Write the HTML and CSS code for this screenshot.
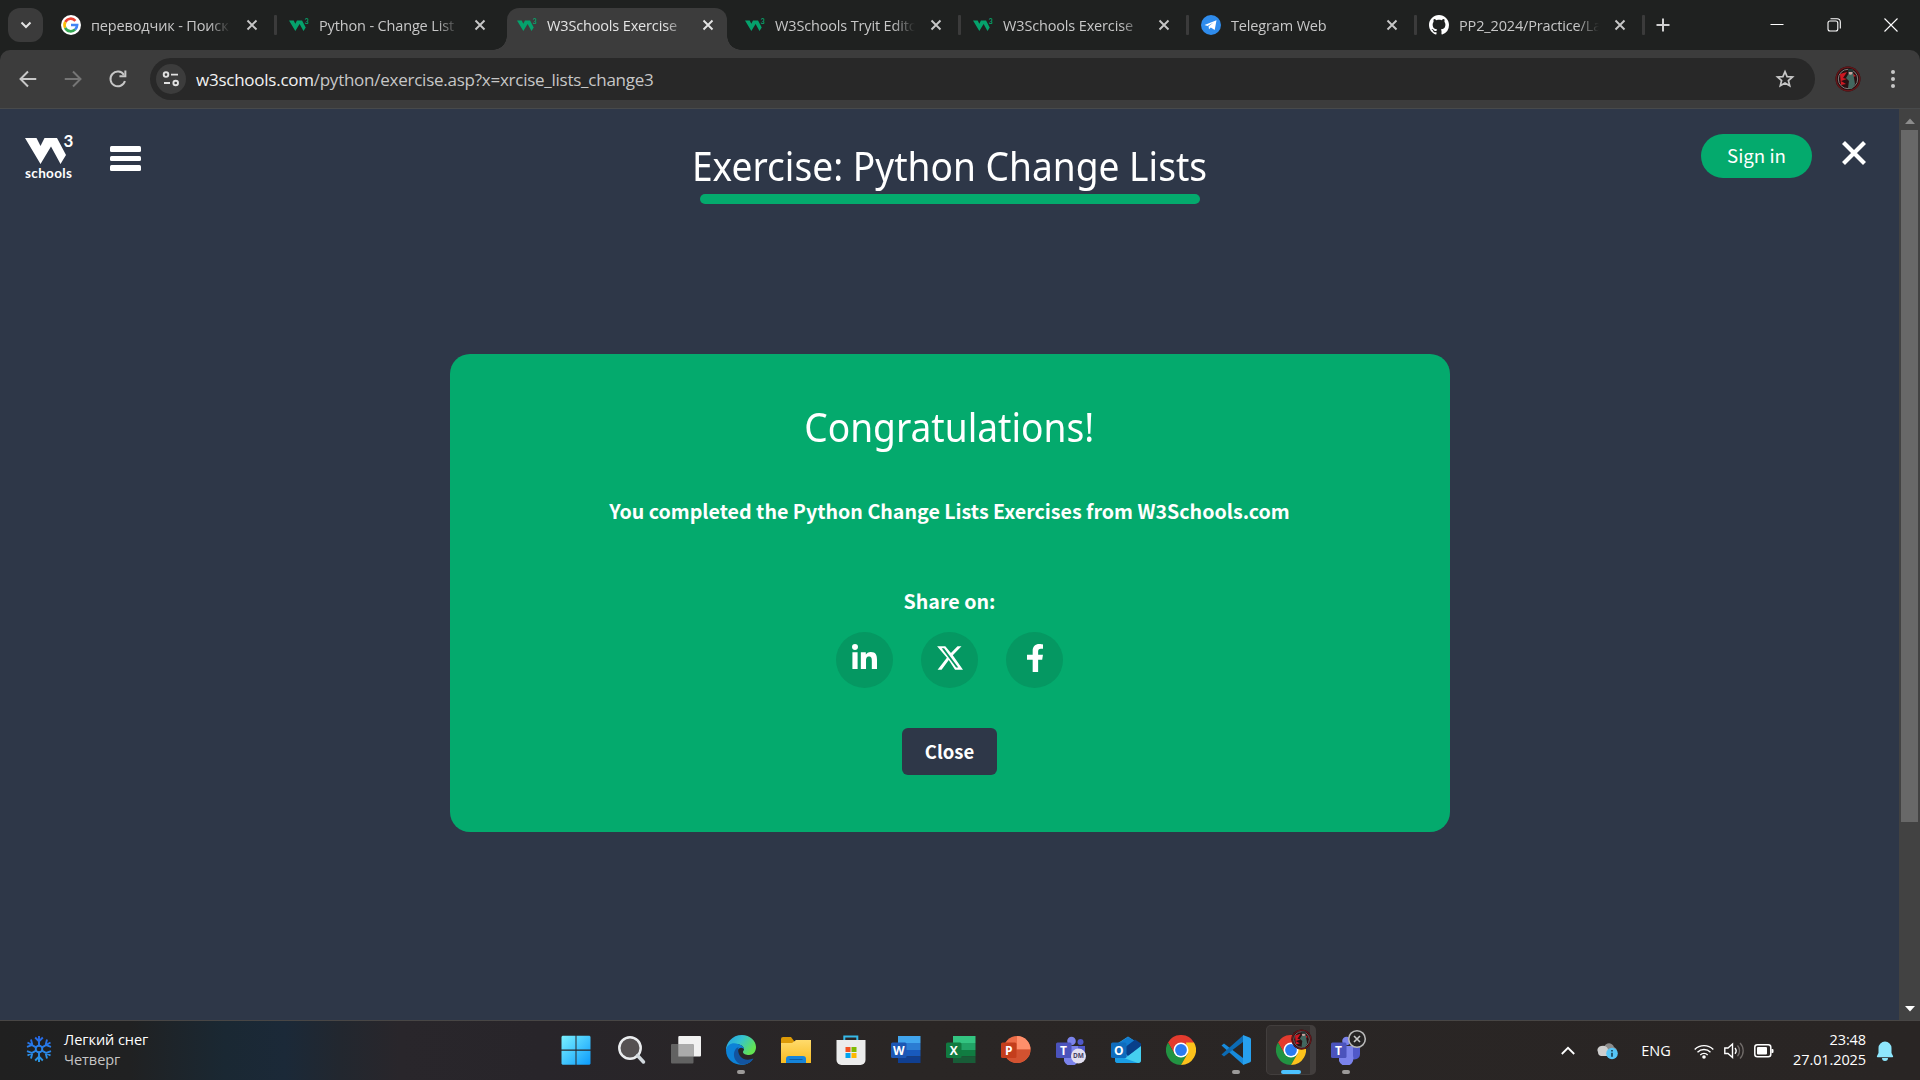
FILE: index.html
```html
<!DOCTYPE html>
<html lang="ru">
<head>
<meta charset="utf-8">
<title>W3Schools Exercise</title>
<link rel="stylesheet" href="styles.css">
</head>
<body>
<svg class="defs" aria-hidden="true">
  <symbol id="w3mark" viewBox="0 0 49 30"><path d="M0 4h11.500l4 8 4-8H32l9 17-5.500 9L26 12.500 15.500 30z" fill="currentColor"/><text x="38.500" y="13" class="mark-three" fill="currentColor">3</text></symbol>
  <symbol id="x" viewBox="0 0 12 12"><path d="M1.500 1.500l9 9m0-9l-9 9" stroke="currentColor" stroke-width="1.900" fill="none"/></symbol>
  <symbol id="chrome" viewBox="0 0 30 30">
    <path d="M2 7.500A15 15 0 0 1 28 7.500L21 15 8.500 18.700z" fill="#e33b2e"/>
    <path d="M2 7.500A15 15 0 0 0 15 30L21.500 18.700 8.500 18.700z" fill="#229342"/>
    <path d="M28 7.500A15 15 0 0 1 15 30L21.500 18.700 20 7.500z" fill="#fcc21b"/>
    <circle cx="15" cy="15" r="7.500" fill="#fff"/><circle cx="15" cy="15" r="5.900" fill="#2a7bf0"/>
  </symbol>
  <symbol id="avatar" viewBox="0 0 26 26">
    <circle cx="13" cy="13" r="12.500" fill="#1c1011"/><circle cx="13" cy="13" r="11.700" fill="none" stroke="#651619" stroke-width="1.500"/><circle cx="13" cy="13" r="9.700" fill="#291012" stroke="#827b7b" stroke-width="1"/>
    <path d="M5 8l7-2-4 6 4 1-6 2 5 3-5 1zM17 7l4 3-3 1z" fill="#cd1822"/><path d="M14 7l4-1 1 6 1 6-3 5-4-1 1-7-3-3z" fill="#42675f"/><circle cx="15.500" cy="6.700" r="2" fill="#c8a09c"/><path d="M13 3h5v3h-5z" fill="#243533"/>
  </symbol>
</svg>

<header class="browser">
  <div class="tabstrip">
    <div class="tabsearch"><svg width="12" height="8" viewBox="0 0 12 8"><path d="M1.500 1.500L6 6l4.500-4.500" fill="none" stroke="#e3e3e3" stroke-width="2"/></svg></div>
    <div class="tabs">
      <div class="tab ruled"><svg class="fav" viewBox="0 0 20 20"><circle cx="10" cy="10" r="10" fill="#fff"/><g fill="none" stroke-width="2.700"><path d="M4.300 7A6.200 6.200 0 0 1 14.400 5.800" stroke="#ea4335"/><path d="M4.200 12.800A6.200 6.200 0 0 1 4.300 7" stroke="#fbbc05"/><path d="M14.200 14.400A6.200 6.200 0 0 1 4.200 12.800" stroke="#34a853"/><path d="M10 10h6.100A6 6 0 0 1 14.100 14.400" stroke="#4285f4"/></g></svg><span class="name">переводчик - Поиск</span><svg class="x"><use href="#x"/></svg></div>
      <div class="tab"><svg class="fav w3"><use href="#w3mark"/></svg><span class="name">Python - Change List</span><svg class="x"><use href="#x"/></svg></div>
      <div class="tab active"><svg class="fav w3"><use href="#w3mark"/></svg><span class="name">W3Schools Exercise</span><svg class="x"><use href="#x"/></svg></div>
      <div class="tab ruled"><svg class="fav w3"><use href="#w3mark"/></svg><span class="name">W3Schools Tryit Edito</span><svg class="x"><use href="#x"/></svg></div>
      <div class="tab ruled"><svg class="fav w3"><use href="#w3mark"/></svg><span class="name">W3Schools Exercise</span><svg class="x"><use href="#x"/></svg></div>
      <div class="tab ruled"><svg class="fav" viewBox="0 0 20 20"><circle cx="10" cy="10" r="10" fill="#2f8cec"/><path d="M3.500 10L15.500 5.200 13.700 15 9.800 12.400 8 14.200 7.600 11.300 12.500 7.500 6.500 11z" fill="#fff"/></svg><span class="name">Telegram Web</span><svg class="x"><use href="#x"/></svg></div>
      <div class="tab ruled"><svg class="fav" viewBox="0 0 16 16"><path fill="#fff" d="M8 0C3.580 0 0 3.580 0 8c0 3.540 2.290 6.530 5.470 7.590.4.070.55-.17.55-.38 0-.19-.01-.82-.01-1.490-2.010.37-2.530-.49-2.690-.94-.09-.23-.48-.94-.82-1.130-.28-.15-.68-.52-.01-.53.63-.01 1.080.58 1.230.82.72 1.210 1.870.87 2.330.66.07-.52.28-.87.51-1.070-1.780-.2-3.640-.89-3.640-3.950 0-.87.31-1.590.82-2.150-.08-.2-.36-1.020.08-2.120 0 0 .67-.21 2.200.82.64-.18 1.320-.27 2-.27s1.360.09 2 .27c1.530-1.040 2.200-.82 2.200-.82.44 1.100.16 1.920.08 2.120.51.56.82 1.270.82 2.150 0 3.070-1.870 3.750-3.650 3.950.29.25.54.73.54 1.480 0 1.070-.01 1.930-.01 2.200 0 .21.15.46.55.38A8.010 8.010 0 0 0 16 8c0-4.420-3.580-8-8-8z"/></svg><span class="name">PP2_2024/Practice/La</span><svg class="x"><use href="#x"/></svg></div>
    </div>
    <svg class="plus" width="14" height="14" viewBox="0 0 14 14"><path d="M7 .5v13M.5 7h13" stroke="#d0d0d0" stroke-width="2"/></svg>
    <div class="winbtns">
      <svg viewBox="0 0 14 14"><path d="M.5 6.500h13" stroke="#fff"/></svg>
      <svg viewBox="0 0 14 14"><rect x="1" y="3" width="9.800" height="10" rx="2" fill="none" stroke="#fff" stroke-width="1.100"/><path d="M3.500.8h6.500a3.300 3.300 0 0 1 3.300 3.300v6.500" fill="none" stroke="#fff" stroke-width="1.100"/></svg>
      <svg viewBox="0 0 14 14"><path d="M.5.5l13 13m0-13l-13 13" stroke="#fff" stroke-width="1.100"/></svg>
    </div>
  </div>
  <div class="toolbar">
    <svg class="nav" viewBox="0 0 20 20"><path d="M17.500 10H4M10 3.200L3.200 10l6.800 6.800" /></svg>
    <svg class="nav dim" viewBox="0 0 20 20"><path d="M2.500 10H16M10 3.200l6.800 6.800-6.800 6.800"/></svg>
    <svg class="nav" viewBox="0 0 20 20"><path d="M16.300 11.800A6.700 6.700 0 1 1 15.400 6.200"/><path d="M16.700 2.200v5.300h-5.400"/></svg>
    <div class="omnibox">
      <div class="siteinfo"><svg width="18" height="16" viewBox="0 0 18 16"><g fill="none" stroke="#e0e0e0" stroke-width="1.900"><circle cx="4" cy="3.600" r="2.300"/><path d="M9 3.600h7M2 12h6"/><circle cx="13.700" cy="12" r="2.300"/></g></svg></div>
      <div class="url"><b>w3schools.com</b><span>/python/exercise.asp?x=xrcise_lists_change3</span></div>
      <svg class="star" width="20" height="20" viewBox="0 0 20 20"><path d="M10 2.600l2.100 5 5.400.4-4.100 3.500 1.300 5.300L10 14l-4.700 2.800 1.300-5.300L2.500 8l5.400-.4z" fill="none" stroke="#c7c7c7" stroke-width="1.700"/></svg>
    </div>
    <svg class="me" width="26" height="26"><use href="#avatar"/></svg>
    <svg class="dots" width="4" height="18" viewBox="0 0 4 18"><g fill="#c7c7c7"><circle cx="2" cy="2" r="2"/><circle cx="2" cy="9" r="2"/><circle cx="2" cy="16" r="2"/></g></svg>
  </div>
</header>

<div class="viewport">
  <main class="page">
    <div class="top">
      <div class="left">
        <div class="logo"><svg width="49" height="30"><use href="#w3mark"/></svg><span>schools</span></div>
        <div class="burger"><i></i><i></i><i></i></div>
      </div>
      <div class="heading"><h1>Exercise: Python Change Lists</h1><div class="progress"></div></div>
      <div class="right">
        <a class="signin">Sign in</a>
        <svg width="26" height="26" viewBox="0 0 26 26"><path d="M2.500 2.500l21 21m0-21l-21 21" stroke="#fff" stroke-width="4.200"/></svg>
      </div>
    </div>
    <section class="card">
      <h2>Congratulations!</h2>
      <p class="done">You completed the Python Change Lists Exercises from W3Schools.com</p>
      <p class="share">Share on:</p>
      <div class="socials">
        <a><svg width="25" height="25" viewBox="0 0 448 448"><path fill="#fff" d="M100.280 448H7.400V148.900h92.880zM53.790 108.100C24.090 108.100 0 83.500 0 53.800a53.790 53.790 0 0 1 107.580 0c0 29.700-24.100 54.300-53.790 54.300zM447.900 448h-92.680V302.400c0-34.700-.7-79.200-48.290-79.200-48.290 0-55.690 37.700-55.690 76.700V448h-92.780V148.900h89.080v40.800h1.300c12.400-23.500 42.690-48.300 87.880-48.300 94 0 111.280 61.900 111.280 142.300V448z"/></svg></a>
        <a><svg width="26" height="24" viewBox="0 0 512 462"><path fill="#fff" d="M389.200 0h70.600L305.600 176.200 487 462H345L233.700 270.600 106.500 462H35.800L200.700 227.500 26.800 0H172.400l100.500 132.900zM364.400 419.800h39.100L151.100 39.900h-42z" transform="translate(-28) scale(1.11 1)"/></svg></a>
        <a><svg width="16" height="28" viewBox="0 0 294 512"><path fill="#fff" d="M279.140 288l14.220-92.660h-88.910v-60.130c0-25.350 12.420-50.060 52.240-50.060h40.420V6.260S260.430 0 225.360 0c-73.220 0-121.080 44.380-121.080 124.720v70.620H0V288h104.280v224h100.170V288z"/></svg></a>
      </div>
      <a class="close">Close</a>
    </section>
  </main>
  <div class="scrollbar"><svg width="10" height="6" viewBox="0 0 10 6"><path d="M0 6l5-5.500L10 6z" fill="#8c8c8c"/></svg><div class="thumb"></div><svg width="10" height="6" viewBox="0 0 10 6"><path d="M0 0h10L5 5.500z" fill="#fff"/></svg></div>
</div>

<footer class="taskbar">
  <div class="weather">
    <svg width="26" height="28" viewBox="-13 -14 26 28"><defs><linearGradient id="sn" gradientUnits="userSpaceOnUse" x1="0" y1="-13" x2="0" y2="13"><stop stop-color="#2566e8"/><stop offset="1" stop-color="#2b9be6"/></linearGradient></defs><g stroke="url(#sn)" stroke-width="1.900" fill="none"><circle r="3.300"/><path d="M0-3.500V-13M-3.800-11.500L0-7.700l3.800-3.800M0 3.500V13M-3.800 11.500L0 7.700l3.800 3.800M3-1.700L11.500-6.500M8-9.500L6.700-4 12-2.200M3 1.700L11.500 6.500M8 9.500L6.700 4 12 2.200M-3-1.700L-11.500-6.500M-8-9.500L-6.700-4-12-2.200M-3 1.700L-11.500 6.500M-8 9.500L-6.700 4-12 2.200"/></g></svg>
    <div><span>Легкий снег</span><span class="sub">Четверг</span></div>
  </div>
  <div class="apps">
    <div class="app"><svg viewBox="0 0 30 30"><defs><linearGradient id="wg" gradientUnits="userSpaceOnUse" x1="0" y1="0" x2="30" y2="30"><stop stop-color="#7df3ff"/><stop offset="1" stop-color="#0a9afc"/></linearGradient></defs><path d="M1.500.7H14.500V14.500H.5V1.700zM15.500 .7h13l1 1V14.500h-14zM.5 15.700h14v14h-13l-1-1zM15.500 15.700h14v13l-1 1h-13z" fill="url(#wg)"/></svg></div>
    <div class="app"><svg viewBox="0 0 30 30"><circle cx="14" cy="13" r="10.700" fill="#555152" stroke="#eaecee" stroke-width="2.500"/><path d="M21.500 20.500l6 6.500" stroke="#d1d8dd" stroke-width="3.500" stroke-linecap="round"/></svg></div>
    <div class="app"><svg viewBox="0 0 30 30"><rect x="7.300" y="1" width="22.700" height="20.500" rx="1" fill="#f1f1f1"/><rect x="0" y="9" width="22.500" height="19.500" rx="1" fill="#626262"/><path d="M7.300 9H21.500a1 1 0 0 1 1 1V21.500H7.300z" fill="#ababab"/></svg></div>
    <div class="app"><svg viewBox="0 0 30 30"><defs><linearGradient id="eg" x1="0" y1="0" x2="1" y2=".5"><stop offset=".1" stop-color="#25a5e2"/><stop offset=".5" stop-color="#35c3cf"/><stop offset="1" stop-color="#63e352"/></linearGradient></defs><path d="M0 15C0 8 6 0 16 0c8 0 14 6 14 12 0 5-3 8-7 8-3 0-6-1-6-3 0-1 1-1.500 1-3C18 10 9 5 0 15z" fill="url(#eg)"/><path d="M0 15C1 9 7 7 12 9c4 1 6 3 6 5-5-4-8 2-6 7s8 7 15 3C21 34 0 31 0 15z" fill="#0d82d7"/><path d="M12.500 12C5 15 7 29 17 29.500 22 29.500 26 26 27.500 23.500c-10 4-17-3-15-11.500z" fill="#13549f"/></svg><u></u></div>
    <div class="app"><svg viewBox="0 0 30 30"><path d="M0 4a2 2 0 0 1 2-2h8l3 4v5H0z" fill="#dc9a07"/><defs><linearGradient id="fo" x2="0" y2="1"><stop stop-color="#ffdb6c"/><stop offset="1" stop-color="#f7bb20"/></linearGradient></defs><path d="M0 8h11l4-3h15v23H0z" fill="url(#fo)"/><path d="M5 28v-4a3 3 0 0 1 3-3h14a3 3 0 0 1 3 3v4z" fill="#1584da"/><path d="M8.500 24.500h13" stroke="#0b5da5"/></svg></div>
    <div class="app"><svg viewBox="0 0 30 30"><path d="M8.300 7V1.500h13V7" fill="none" stroke="#36b9e8" stroke-width="2"/><path d="M.5 5h29v20a5 5 0 0 1-5 5h-19a5 5 0 0 1-5-5z" fill="#ececec"/><path d="M9.500 12h5v5h-5z" fill="#f25022"/><path d="M15.500 12h5v5h-5z" fill="#7fba00"/><path d="M9.500 18h5v5h-5z" fill="#00a4ef"/><path d="M15.500 18h5v5h-5z" fill="#ffb900"/></svg></div>
    <div class="app"><svg viewBox="0 0 30 30"><path d="M7 1h22.500v7H7z" fill="#41a5ee"/><path d="M7 8h22.500v7H7z" fill="#2b7cd3"/><path d="M7 15h22.500v6.500H7z" fill="#185abd"/><path d="M7 21.500h22.500V28H7z" fill="#103f91"/><rect y="7.500" width="15.500" height="15.500" rx="1.500" fill="#1c57b4"/><text x="7.800" y="19.500" class="letter">W</text></svg></div>
    <div class="app"><svg viewBox="0 0 30 30"><path d="M7 1h22.500v7H7z" fill="#33c481"/><path d="M7 8h22.500v7H7z" fill="#21a366"/><path d="M7 15h22.500v6.500H7z" fill="#107c41"/><path d="M7 21.500h22.500V28H7z" fill="#185c37"/><rect y="7.500" width="15.500" height="15.500" rx="1.500" fill="#117a40"/><text x="7.800" y="19.500" class="letter">X</text></svg></div>
    <div class="app"><svg viewBox="0 0 30 30"><circle cx="16" cy="14.500" r="13.500" fill="#ed6c47"/><path d="M16 1a13.500 13.500 0 0 1 13.500 13.500H16z" fill="#ff8f6b"/><path d="M29.500 14.500a13.500 13.500 0 0 1-27 0z" fill="#d35230"/><rect y="7.500" width="15.500" height="15.500" rx="1.500" fill="#c43e1c"/><text x="7.800" y="19.500" class="letter">P</text></svg></div>
    <div class="app"><svg viewBox="0 0 30 30"><circle cx="15.500" cy="6" r="4.300" fill="#7b83eb"/><circle cx="24.500" cy="7" r="3" fill="#5059c9"/><path d="M20 11h9v8h-9z" fill="#5059c9"/><path d="M8 11h14v10a7 7 0 0 1-14 5z" fill="#7b83eb"/><rect y="7.500" width="15.500" height="15.500" rx="1.500" fill="#4b53bc"/><text x="7.500" y="19.500" class="letter">T</text><circle cx="22.500" cy="21" r="7.500" fill="#e2dff0"/><text x="22.500" y="23.200" class="dm">DM</text></svg></div>
    <div class="app"><svg viewBox="0 0 30 30"><path d="M4 10L17 1.500 30 10v15a3 3 0 0 1-3 3H7a3 3 0 0 1-3-3z" fill="#2c9de2"/><path d="M16 9l8-4.500 6 4v4L17 21l-6-6z" fill="#083f8a"/><path d="M17 2l6 3.500L13 13 8 8z" fill="#117cd0"/><path d="M30 11v14a3 3 0 0 1-3 3H8z" fill="#45cff0"/><path d="M7 21l20 7H7a3 3 0 0 1-3-3z" fill="#1a9ee5"/><rect y="7.500" width="15.500" height="15.500" rx="1.500" fill="#0f6cbd"/><text x="7.800" y="19.700" class="letter">O</text></svg></div>
    <div class="app"><svg><use href="#chrome"/></svg></div>
    <div class="app"><svg viewBox="0 0 30 30"><path d="M.5 10.500L3 8.500l19 14.500v6.500z" fill="#178bdc"/><path d="M.5 19.500L3 21.500 22 7V.5z" fill="#0c6bb4"/><path d="M22 0l6.500 2.500a2 2 0 0 1 1.500 2v21a2 2 0 0 1-1.500 2L22 30z" fill="#27a0ee"/></svg><u></u></div>
    <div class="app current"><svg><use href="#chrome"/></svg><svg class="mini"><use href="#avatar"/></svg><u></u></div>
    <div class="app"><svg viewBox="0 0 30 30"><circle cx="15.500" cy="6" r="4.300" fill="#7b83eb"/><path d="M20 11h9v8c0 5-6 7-9 4z" fill="#5059c9"/><path d="M8 11h14v10a7 7 0 0 1-14 5z" fill="#7b83eb"/><rect y="7.500" width="15.500" height="15.500" rx="1.500" fill="#4b53bc"/><text x="7.500" y="19.500" class="letter">T</text></svg><svg class="mini off" viewBox="0 0 20 20"><circle cx="10" cy="10" r="8.300" fill="#262424" stroke="#b8b8b8" stroke-width="1.600"/><path d="M7 7l6 6m0-6l-6 6" stroke="#c8c8c8" stroke-width="1.600"/></svg><u></u></div>
  </div>
  <div class="tray">
    <div class="chev"><svg width="14" height="9" viewBox="0 0 14 9"><path d="M.8 8L7 1.800 13.200 8" fill="none" stroke="#fff" stroke-width="1.800"/></svg></div>
    <div class="cloud"><svg width="22" height="20" viewBox="0 0 22 20"><path d="M7 9a5 5 0 0 1 10-3 4.500 4.500 0 0 1 1 8H8z" fill="#8b8b8b"/><path d="M1 11a4 4 0 0 1 3-6 6 6 0 0 1 7 3v7H4a4 4 0 0 1-3-4z" fill="#cecece"/><circle cx="15" cy="12.500" r="5.800" fill="#55c6f8"/><path d="M15 11.700v4M15 9v1.500" stroke="#173d50" stroke-width="1.600"/></svg></div>
    <div class="lang">ENG</div>
    <div class="sys"><svg width="20" height="16" viewBox="0 0 20 16"><g fill="none" stroke="#fff" stroke-width="1.400"><path d="M.7 6.500a13 13 0 0 1 18.600 0M3.500 9.200a9.200 9.200 0 0 1 13 0M6.300 11.900a5.300 5.300 0 0 1 7.400 0"/></g><circle cx="10" cy="14" r="1.800" fill="#fff"/></svg></div>
    <div class="sys"><svg width="20" height="18" viewBox="0 0 20 18"><path d="M.8 6v5.500H4L8.500 15.500V2L4 6z" fill="none" stroke="#fff" stroke-width="1.400"/><path d="M11 6a4.500 4.500 0 0 1 0 5.700" fill="none" stroke="#fff" stroke-width="1.400"/><path d="M13.500 3.500a8 8 0 0 1 0 10.700M16 1a11 11 0 0 1 0 15.500" fill="none" stroke="#716c6a" stroke-width="1.300"/></svg></div>
    <div class="sys"><svg width="20" height="14" viewBox="0 0 20 14"><rect x=".8" y=".8" width="16" height="12" rx="2.500" fill="none" stroke="#fff" stroke-width="1.500"/><rect x="3" y="3" width="10" height="7.600" rx="1" fill="#fff"/><path d="M17.500 5h1a1 1 0 0 1 1 1v2a1 1 0 0 1-1 1h-1z" fill="#fff"/></svg></div>
    <div class="clock"><span>23:48</span><span>27.01.2025</span></div>
    <div class="bell"><svg width="18" height="20" viewBox="0 0 18 20"><path d="M9 .5a6.500 6.500 0 0 1 6.500 6.500v5l1.500 3a.9.900 0 0 1-.8 1.300H1.800A.9.900 0 0 1 1 15l1.500-3V7A6.500 6.500 0 0 1 9 .5zM6 17h6a3 3 0 0 1-6 0z" fill="#8ee7fd"/></svg></div>
  </div>
</footer>
</body>
</html>
```

FILE: styles.css
```css
*, *::before, *::after { box-sizing: border-box; }
body { margin: 0; width: 1920px; height: 1080px; overflow: hidden; display: flex; flex-direction: column; background: #2e3748; font-family: "Open Sans", "Noto Sans", sans-serif; color: #fff; }
svg { display: block; flex: none; }
.defs { position: absolute; width: 0; height: 0; }
.mark-three { font: 700 17px Lato, sans-serif; }

/* browser chrome */
.browser { height: 109px; flex: none; background: #1f2120; border-bottom: 1px solid #484a4b; }
.tabstrip { height: 50px; display: flex; align-items: flex-start; padding: 8px 0 0 8px; }
.tabsearch { width: 35px; height: 34px; border-radius: 12px; background: #3b3b3b; display: flex; align-items: center; justify-content: center; }
.tabs { display: flex; gap: 8px; margin-left: 8px; }
.tab { width: 220px; height: 42px; display: flex; align-items: center; padding: 0 0 8px 10px; position: relative; color: #c7c7c7; }
.fav { width: 20px; height: 20px; }
.w3 { color: #05a26c; height: 14px; }
.name { font-size: 14.500px; letter-spacing: -.15px; width: 140px; margin-left: 10px; line-height: 22px; padding-top: 1px; white-space: nowrap; overflow: hidden; -webkit-mask-image: linear-gradient(90deg, #000 118px, transparent 140px); mask-image: linear-gradient(90deg, #000 118px, transparent 140px); }
.x { width: 12px; height: 12px; margin-left: 15px; }
.ruled::after { content: ""; position: absolute; right: -6px; top: 7px; width: 3px; height: 20px; border-radius: 1px; background: #3b3b3b; }
.active { background: #3c3c3c; color: #e4e4e4; border-radius: 12px 12px 0 0; }
.active::before, .active::after { content: ""; position: absolute; bottom: 0; width: 14px; height: 14px; }
.active::before { left: -14px; background: radial-gradient(circle at 0 0, transparent 13.500px, #3c3c3c 14px); }
.active::after { right: -14px; background: radial-gradient(circle at 100% 0, transparent 13.500px, #3c3c3c 14px); }
.plus { margin: 10px 0 0 17px; }
.winbtns { display: flex; gap: 43px; margin: 10px 22px 0 auto; }
.winbtns svg { width: 14px; height: 14px; }
.toolbar { height: 58px; background: #3c3c3c; border-radius: 10px 10px 0 0; display: flex; align-items: center; padding-left: 17px; }
.nav { width: 22px; height: 22px; margin-right: 23px; fill: none; stroke: #c7c7c7; stroke-width: 1.800; }
.dim { stroke: #757575; }
.nav:nth-child(3) { margin-right: 21px; }
.omnibox { width: 1665px; height: 42px; border-radius: 21px; background: #282828; display: flex; align-items: center; padding: 0 20px 0 6px; flex: none; }
.siteinfo { width: 30px; height: 30px; border-radius: 50%; background: #3c3c3c; display: flex; align-items: center; justify-content: center; }
.url { margin-left: 10px; font-size: 17px; letter-spacing: -.25px; color: #c7c7c7; white-space: nowrap; }
.url b { font-weight: 400; color: #f2f2f2; }
.star { margin-left: auto; }
.me { margin-left: 20px; }
.dots { margin-left: 30px; }

/* page */
.viewport { height: 911px; flex: none; display: flex; }
.page { width: 1899px; background: #2e3748; }
.top { height: 245px; display: grid; grid-template-columns: 450px 1fr 450px; }
.left { display: flex; padding: 25px 0 0 25px; gap: 36px; }
.logo { width: 49px; height: 50px; font: 700 13.500px/15px Lato, sans-serif; }
.logo span { display: block; margin-top: 2px; letter-spacing: .35px; }
.burger { width: 31px; padding-top: 12px; display: flex; flex-direction: column; gap: 4px; }
.burger i { height: 5.500px; border-radius: 1.500px; background: #fff; }
.heading { display: flex; flex-direction: column; align-items: center; }
h1, h2 { font-weight: 400; font-size: 40px; line-height: 60px; margin: 0; white-space: nowrap; font-family: "Noto Sans", sans-serif; transform: scaleX(.928); }
h1 { margin-top: 27px; }
.progress { width: 500px; height: 10px; margin-top: -2px; border-radius: 5px; background: #04aa6d; }
.right { display: flex; justify-content: flex-end; padding: 25px 32px 0 0; gap: 29px; }
.right svg { margin-top: 6px; }
.signin { width: 111px; height: 44px; border-radius: 22px; background: #04aa6d; text-align: center; font: 400 18.700px/42px "Noto Sans CJK SC", sans-serif; }
.card { width: 1000px; height: 478px; margin: 0 auto; border-radius: 20px; background: #04aa6d; display: flex; flex-direction: column; align-items: center; font-family: "Noto Sans CJK SC", sans-serif; }
h2 { margin-top: 43px; }
p { margin: 0; font-weight: 700; font-size: 19.650px; line-height: 30px; white-space: nowrap; }
.done { margin-top: 39px; }
.share { margin-top: 60px; }
.socials { display: flex; gap: 28px; margin-top: 16px; }
.socials a { width: 57px; height: 56px; border-radius: 50%; background: #059862; display: flex; justify-content: center; padding-top: 12px; }
.socials a + a svg { margin-top: 2px; }
.socials a + a + a svg { margin-top: 0; }
.close { width: 95px; height: 47px; margin-top: 40px; border-radius: 6px; background: #2e3748; text-align: center; font-weight: 700; font-size: 18.500px; line-height: 47px; }
.scrollbar { width: 21px; background: #424242; display: flex; flex-direction: column; align-items: center; padding-top: 9px; }
.thumb { width: 17px; height: 692px; margin: 6px 0 184px; background: #686868; }

/* taskbar */
.taskbar { height: 60px; flex: none; display: flex; border-top: 1px solid #484645; background: linear-gradient(90deg, #202020 0, #202122 130px, #1a2833 225px, #1b2938 285px, #22272f 340px, #29262b 400px, #28252a 540px, #2a2625 900px, #292524 1920px); font-size: 14.500px; }
.weather { width: 548px; padding: 14px 0 0 26px; display: flex; gap: 12px; }
.weather span { display: block; line-height: 20px; letter-spacing: -.05px; white-space: nowrap; }
.weather div { margin-top: -5px; }
.weather .sub { color: #c5c5c5; }
.apps { display: flex; }
.app { width: 55px; height: 59px; display: flex; justify-content: center; padding-top: 14px; position: relative; }
.app > svg { width: 30px; height: 30px; position: relative; }
.app u { position: absolute; left: 23.500px; top: 49px; width: 8px; height: 4px; border-radius: 2px; background: #9c9a99; }
.app.current::before { content: ""; position: absolute; left: 3px; top: 4px; width: 50px; height: 50px; border-radius: 5px; background: #353130; border: 1px solid #423e3d; border-right-width: 6px; }
.app.current u { left: 18px; width: 20px; background: #4cc2ff; }
.app > .mini { position: absolute; left: 28px; top: 8px; width: 21px; height: 21px; }
.app > .off { left: 28.500px; top: 8px; width: 20px; height: 20px; }
.letter { font: 700 12px "Open Sans", sans-serif; fill: #fff; text-anchor: middle; }
.dm { font: 700 6.500px "Open Sans", sans-serif; fill: #474164; text-anchor: middle; }
.tray { margin-left: auto; display: flex; padding-right: 20px; height: 59px; align-items: center; }
.tray > div { display: flex; justify-content: center; }
.chev { width: 44px; }
.cloud { width: 36px; }
.lang { width: 60px; }
.sys { width: 30px; }
.sys:nth-child(4) { margin-left: 3px; }
.tray .clock { width: 87px; flex-direction: column; align-items: flex-end; line-height: 20px; letter-spacing: -.1px; white-space: nowrap; padding-bottom: 2px; }
.bell { width: 30px; margin-left: 4px; }
```
